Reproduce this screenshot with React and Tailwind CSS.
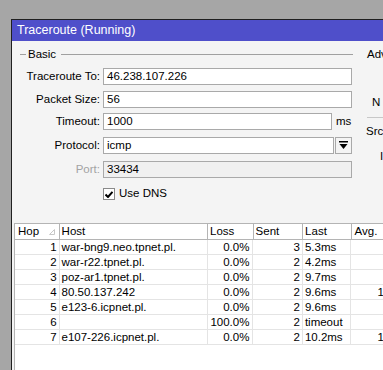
import React from "react";

const rows = [
  { hop: 1, host: "war-bng9.neo.tpnet.pl.", loss: "0.0%", sent: 3, last: "5.3ms" },
  { hop: 2, host: "war-r22.tpnet.pl.", loss: "0.0%", sent: 2, last: "4.2ms" },
  { hop: 3, host: "poz-ar1.tpnet.pl.", loss: "0.0%", sent: 2, last: "9.7ms" },
  { hop: 4, host: "80.50.137.242", loss: "0.0%", sent: 2, last: "9.6ms", more: true },
  { hop: 5, host: "e123-6.icpnet.pl.", loss: "0.0%", sent: 2, last: "9.6ms" },
  { hop: 6, host: "", loss: "100.0%", sent: 2, last: "timeout" },
  { hop: 7, host: "e107-226.icpnet.pl.", loss: "0.0%", sent: 2, last: "10.2ms", more: true },
];

const FieldRow = ({ label, muted, children, className = "" }) => (
  <div className={`flex items-center h-[17px] ${className}`}>
    <div className={`w-[91px] pr-[3px] text-right whitespace-nowrap ${muted ? "text-[#a3a3a3]" : "text-black"}`}>
      {label}
    </div>
    {children}
  </div>
);

const Input = ({ value, width, disabled }) => (
  <div
    className={`h-[17px] border border-[#a9a9a9] px-[3px] leading-[15px] ${
      disabled ? "bg-[#f0f0f0]" : "bg-white"
    }`}
    style={{ width }}
  >
    {value}
  </div>
);

export default function App() {
  return (
    <div
      className="h-[370px] w-[383px] overflow-hidden bg-[#a6a6a6] pt-[19px] pl-[11px] text-[11.5px] text-black"
      style={{ fontFamily: "Tahoma, 'Liberation Sans', Arial, sans-serif" }}
    >
      <div className="h-[400px] w-[400px] border-l border-t border-[#202020] bg-[#f4f4f4]">
        <div className="flex h-[21px] items-center bg-[#4f4fca] pl-[5px] text-[12.5px] text-white">
          Traceroute (Running)
        </div>

        <div className="flex">
          {/* left panel */}
          <div className="w-[341px]">
            <div className="mt-[8px] flex h-[11px] items-center">
              <div className="ml-[8px] h-px w-[6px] bg-[#a0a0a0]" />
              <span className="ml-[2px] mr-[5px]">Basic</span>
              <div className="h-px flex-1 bg-[#a0a0a0]" />
            </div>

            <FieldRow label="Traceroute To:" className="mt-[8px]">
              <Input value="46.238.107.226" width={249} />
            </FieldRow>
            <FieldRow label="Packet Size:" className="mt-[6px]">
              <Input value="56" width={249} />
            </FieldRow>
            <FieldRow label="Timeout:" className="mt-[5px]">
              <Input value="1000" width={229} />
              <span className="ml-[4px]">ms</span>
            </FieldRow>
            <FieldRow label="Protocol:" className="mt-[7px]">
              <Input value="icmp" width={231} />
              <div className="ml-[1px] flex h-[17px] w-[17px] items-center justify-center border border-[#a9a9a9] bg-[#f4f4f4]">
                <svg width="9" height="9" viewBox="0 0 9 9">
                  <rect x="0" y="0" width="9" height="1.5" fill="#000" />
                  <path d="M0.5 3 H8.5 L4.5 8 Z" fill="#000" />
                </svg>
              </div>
            </FieldRow>
            <FieldRow label="Port:" muted className="mt-[7px]">
              <Input value="33434" width={249} disabled />
            </FieldRow>

            <div className="mt-[10px] flex h-[12px] items-center pl-[91px]">
              <div className="flex h-[12px] w-[12px] items-center justify-center border border-[#8a8a8a] bg-white">
                <svg width="8" height="7" viewBox="0 0 8 7">
                  <path d="M0.5 3.5 L3 6 L7.5 0.8" stroke="#000" strokeWidth="2" fill="none" />
                </svg>
              </div>
              <span className="ml-[4px]">Use DNS</span>
            </div>
          </div>

          {/* right panel (clipped) */}
          <div className="w-[40px] whitespace-nowrap">
            <div className="mt-[8px] flex h-[11px] items-center">
              <div className="ml-[12px] h-px w-[7px] bg-[#a0a0a0]" />
              <span className="ml-[2px]">Advanced</span>
            </div>
            <div className="mt-[36px] pl-[19px] leading-[13px]">N</div>
            <div className="mt-[8px] ml-[14px] h-px w-[30px] bg-[#c8c8c8]" />
            <div className="mt-[7px] pl-[13px] leading-[13px]">Src.</div>
            <div className="mt-[12px] pl-[27px] leading-[13px]">I</div>
          </div>
        </div>

        {/* table */}
        <div className="ml-[2px] mt-[23px] h-[200px] border-l border-t border-[#b4b4b4] bg-white">
          <div className="flex h-[16px] border-b border-[#b4b4b4] leading-[15px]">
            <div className="flex w-[45px] items-center justify-between border-r border-[#b4b4b4] pl-[3px] pr-[4px]">
              <span>Hop</span>
              <svg width="6" height="6" viewBox="0 0 6 6">
                <path d="M5.5 0.5 V5.5 H0.5 Z" fill="none" stroke="#c8c8c8" />
              </svg>
            </div>
            <div className="w-[150px] border-r border-[#b4b4b4] pl-[2px]">Host</div>
            <div className="w-[46px] border-r border-[#b4b4b4] pl-[2px]">Loss</div>
            <div className="w-[50px] border-r border-[#b4b4b4] pl-[2px]">Sent</div>
            <div className="w-[49px] border-r border-[#b4b4b4] pl-[2px]">Last</div>
            <div className="w-[60px] pl-[3px]">Avg.</div>
          </div>
          {rows.map((r) => (
            <div key={r.hop} className="flex h-[15px] border-b border-[#e4e4e4] leading-[14px]">
              <div className="w-[45px] border-r border-[#e4e4e4] pr-[2px] text-right">{r.hop}</div>
              <div className="w-[150px] border-r border-[#e4e4e4] pl-[2px]">{r.host}</div>
              <div className="w-[46px] border-r border-[#e4e4e4] pr-[3px] text-right">{r.loss}</div>
              <div className="w-[50px] border-r border-[#e4e4e4] pr-[2px] text-right">{r.sent}</div>
              <div className="w-[49px] border-r border-[#e4e4e4] pl-[2px]">{r.last}</div>
              <div className="w-[60px] pl-[26px]">{r.more ? "1" : ""}</div>
            </div>
          ))}
        </div>
      </div>
    </div>
  );
}
